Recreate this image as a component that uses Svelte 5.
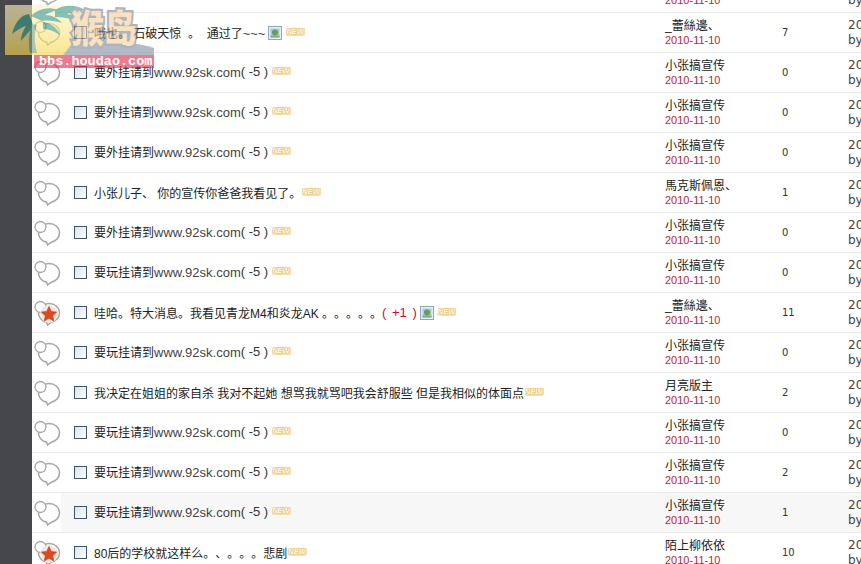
<script lang="ts">
	// Thread list of a forum board, scrolled part way down
	const WAIGUA = { title: '要外挂请到www.92sk.com', score: '( -5 )', author: '小张搞宣传', replies: 0 };
	const WANGUA = { title: '要玩挂请到www.92sk.com', score: '( -5 )', author: '小张搞宣传', replies: 0 };

	const rows = [
		{ ...WAIGUA },
		{ title: '哦也。 石破天惊 \u00a0。 \u00a0通过了~~~', image: true, author: '_蕾絲邊、', replies: 7 },
		{ ...WAIGUA },
		{ ...WAIGUA },
		{ ...WAIGUA },
		{ title: '小张儿子、 你的宣传你爸爸我看见了。', author: '馬克斯佩恩、', replies: 1 },
		{ ...WAIGUA },
		{ ...WANGUA },
		{ title: '哇哈。特大消息。我看见青龙M4和炎龙AK 。。。。。', plus: '( +1 )', image: true, hot: true, author: '_蕾絲邊、', replies: 11 },
		{ ...WANGUA },
		{ title: '我决定在姐姐的家自杀 我对不起她 想骂我就骂吧我会舒服些 但是我相似的体面点', author: '月亮版主', replies: 2 },
		{ ...WANGUA },
		{ ...WANGUA, replies: 2 },
		{ ...WANGUA, replies: 1, hover: true },
		{ title: '80后的学校就这样么。、。。。悲剧', hot: true, author: '陌上柳依依', replies: 10 }
	];

	// the url and the tildes sit a size above the CJK text in the original
	function split(title: string) {
		return title.split(/(www\.\S+|~+)/).filter(Boolean).map((text) => ({
			text,
			latin: /^(www\.|~)/.test(text)
		}));
	}
</script>

<div class="page">
	<aside class="rail"></aside>

	<main class="threads">
		{#each rows as row}
			<div class="row" class:hover={row.hover}>
				<div class="state">
					<svg width="28" height="28" viewBox="0 0 28 28" fill="none">
						<path d="M16 4.500c6 0 10.500 4 10.500 9.500 0 4.800-3.700 8.300-8.300 9.200l-3.700 2.900-1-3.100C9 22.300 5.500 18.500 5.500 14c0-5.500 4.700-9.500 10.500-9.500z" fill="#fff" stroke="#a6a6a6" stroke-width="1.500" />
						<circle cx="7.500" cy="8" r="5.500" fill="#fff" stroke="#a6a6a6" stroke-width="1.300" />
						{#if row.hot}
							<circle cx="16" cy="15" r="8.800" fill="#f3e6df" />
							<path d="M16 7.500l2.300 5 5.400.6-4 3.600 1.100 5.300-4.800-2.700-4.800 2.700 1.100-5.300-4-3.600 5.400-.6z" fill="#dc4b1e" stroke="#c43c14" stroke-width=".6" />
						{/if}
					</svg>
				</div>
				<input class="check" type="checkbox" />
				<div class="subject" class:linked={row.score}>
					<span>{#each split(row.title) as part}{#if part.latin}<span class="latin">{part.text}</span>{:else}{part.text}{/if}{/each}</span>
					{#if row.score}<span class="score">{row.score}</span>{/if}
					{#if row.plus}<span class="plus">{row.plus}</span>{/if}
					{#if row.image}
						<svg class="pic" width="14" height="14" viewBox="0 0 14 14">
							<rect x=".5" y=".5" width="13" height="13" fill="#e4eef4" stroke="#8fa9bb" />
							<rect x="2.500" y="2.500" width="9" height="9" fill="#a4cbe0" />
							<circle cx="7" cy="6.500" r="3" fill="#6c9a52" />
							<rect x="2.500" y="9.500" width="9" height="2" fill="#7fa98a" />
						</svg>
					{/if}
					<span class="new">NEW</span>
				</div>
				<div class="author">
					<span>{row.author}</span>
					<span class="date">2010-11-10</span>
				</div>
				<div class="replies">{row.replies}</div>
				<div class="last">
					<span>2010-11-10</span>
					<span>by 小张搞宣传</span>
				</div>
			</div>
		{/each}
	</main>

	<!-- site watermark stamped over the corner -->
	<div class="stamp">
		<svg class="art" width="149" height="68" viewBox="0 0 149 68">
			<defs>
				<linearGradient id="sun" x1="0" y1="0" x2="0" y2="1">
					<stop offset="0" stop-color="#fff6c8" />
					<stop offset="1" stop-color="#f8d850" />
				</linearGradient>
			</defs>
			<path d="M0 5h64l16 50H0z" fill="url(#sun)" />
			<path d="M58 55l8-10c20-4 54-6 83 3v7z" fill="#8792a8" />
			<g fill="#3f9a86">
				<path d="M24 14c-8 1-14 8-17 20 5-4 10-7 14-8-3 5-5 9-5 15 5-6 9-11 13-14z" />
				<path d="M26 16c7-7 17-10 27-6-5 1-10 3-13 5 7 0 13 3 17 8-7-2-14-3-20-2z" />
				<path d="M38 22c7 1 14 5 17 13-6-4-11-6-17-6z" />
				<path d="M50 10c8-5 20-6 30 0-7 0-13 1-18 4 6 1 10 3 14 8-8-3-17-5-26-5z" />
				<path d="M27 24l5 1c-3 7-3 17 0 28h-7c-2-10-1-20 2-29z" fill="#7aa284" />
			</g>
		</svg>
		<span class="brand">猴岛</span>
		<span class="url">bbs.houdao.com</span>
	</div>
</div>

<style>
	:global(body) {
		background: #fff;
		overflow: hidden;
	}

	.page {
		position: relative;
		display: flex;
		height: 564px;
		overflow: hidden;
		font-family: "Liberation Sans", "Noto Sans CJK SC", sans-serif;
		font-size: 12px;
		color: #222;
	}

	.rail {
		flex: 0 0 32px;
		background: #46474b;
	}

	.threads {
		flex: 1;
		min-width: 0;
		margin-top: -27px;
	}

	.row {
		display: grid;
		grid-template-columns: 42px 20px 571px 117px 66px 1fr;
		align-items: center;
		height: 40px;
		box-sizing: border-box;
		border-bottom: 1px solid #ebebeb;
		overflow: hidden;
	}

	.row.hover {
		background: #f7f7f7;
	}

	.state {
		display: flex;
		align-items: center;
		width: 29px;
		height: 39px;
		background: #fff;
		padding-left: 1px;
		box-sizing: border-box;
	}

	.check {
		appearance: none;
		width: 13px;
		height: 13px;
		margin: 0;
		border: 1px solid #3f5468;
		background: linear-gradient(135deg, #d9e2ea, #fff);
	}

	.subject {
		display: flex;
		align-items: center;
		white-space: pre;
		font-size: 12px;
		text-spacing-trim: space-all;
	}

	.subject.linked {
		padding-bottom: 2px;
	}

	.latin {
		font-size: 13px;
		color: #444;
	}

	.score {
		font-size: 13px;
		color: #333;
		margin-right: 3px;
	}

	.plus {
		font-size: 13px;
		word-spacing: 2px;
		color: #c8102e;
	}

	.pic {
		margin: 0 3px;
	}

	.new {
		margin: -2px 0 0 1px;
		padding-right: 1px;
		border-radius: 2px;
		background: #f7e0a6;
		font-size: 7.500px;
		font-weight: 700;
		font-style: italic;
		line-height: 8px;
		color: #fffdf0;
		-webkit-text-stroke: 0.5px #d9983a;
		paint-order: stroke fill;
	}

	.author,
	.last {
		display: flex;
		flex-direction: column;
		line-height: 14px;
		white-space: nowrap;
	}

	.author {
		padding-top: 1px;
	}

	.last {
		gap: 1px;
		font-family: "DejaVu Sans", sans-serif;
		font-size: 12px;
		color: #444;
	}

	.date {
		font-size: 11px;
		color: #b81f35;
	}

	.replies {
		font-family: "DejaVu Sans", sans-serif;
		font-size: 10px;
		color: #333;
	}

	.stamp {
		position: absolute;
		left: 5px;
		top: 0;
		width: 149px;
		height: 68px;
		opacity: 0.62;
		pointer-events: none;
	}

	.art {
		display: block;
	}

	.brand {
		position: absolute;
		left: 66px;
		top: 7px;
		font-family: "Noto Sans CJK SC", sans-serif;
		font-size: 33px;
		font-weight: 900;
		line-height: 33px;
		color: #f8cf9c;
		-webkit-text-stroke: 4px #7d8794;
		paint-order: stroke fill;
		transform: scaleY(1.15);
		transform-origin: top;
	}

	.url {
		position: absolute;
		left: 29px;
		right: 0;
		bottom: 0;
		height: 13px;
		padding-left: 5px;
		background: #e02c48;
		font-family: "Liberation Mono", monospace;
		font-size: 13.500px;
		font-weight: 700;
		line-height: 13px;
		color: #fff;
	}
</style>
